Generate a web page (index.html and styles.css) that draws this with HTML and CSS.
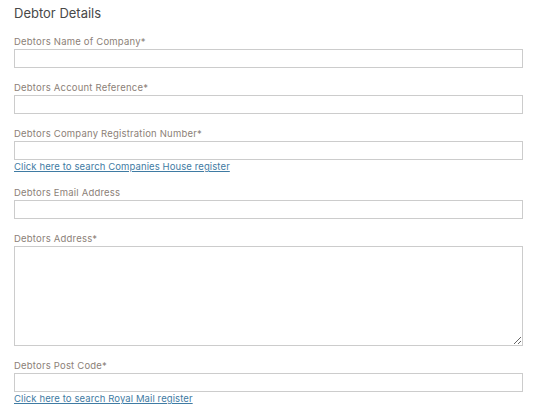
FILE: index.html
```html
<!DOCTYPE html>
<html>
<head>
<meta charset="utf-8">
<link rel="stylesheet" href="styles.css">
</head>
<body>
<div class="panel">
  <h3 class="title">Debtor Details</h3>
  <div class="field">
    <label class="label">Debtors Name of Company*</label>
    <input class="input" type="text">
  </div>
  <div class="field">
    <label class="label">Debtors Account Reference*</label>
    <input class="input" type="text">
  </div>
  <div class="field">
    <label class="label">Debtors Company Registration Number*</label>
    <input class="input" type="text">
    <a class="link" href="#">Click here to search Companies House register</a>
  </div>
  <div class="field">
    <label class="label">Debtors Email Address</label>
    <input class="input" type="text">
  </div>
  <div class="field">
    <label class="label">Debtors Address*</label>
    <textarea class="input area"></textarea>
  </div>
  <div class="field">
    <label class="label">Debtors Post Code*</label>
    <input class="input" type="text">
    <a class="link" href="#">Click here to search Royal Mail register</a>
  </div>
</div>
</body>
</html>
```

FILE: styles.css
```css
html, body {
  margin: 0;
  padding: 0;
  background: #ffffff;
}
body {
  font-family: Inter, "Open Sans", sans-serif;
}
.panel {
  padding: 5px 0 0 14px;
  display: flex;
  flex-direction: column;
}
.title {
  margin: 0 0 15px 0;
  font-size: 13px;
  line-height: 16px;
  font-weight: 400;
  color: #484848;
}
.field {
  display: flex;
  flex-direction: column;
  align-items: flex-start;
  margin-bottom: 14px;
}
.label {
  font-size: 9.5px;
  line-height: 12px;
  letter-spacing: 0.2px;
  color: #8c7f78;
  margin-bottom: 1px;
}
.input {
  box-sizing: border-box;
  width: 509px;
  height: 19px;
  margin: 0;
  padding: 2px 4px;
  border: 1px solid #cccccc;
  border-radius: 0;
  background: #ffffff;
  font-family: inherit;
  font-size: 10px;
  outline: none;
}
.area {
  height: 100px;
  display: block;
}
.link {
  font-size: 9.5px;
  line-height: 13px;
  letter-spacing: 0.1px;
  color: #3f7ba3;
  text-decoration: underline;
}
```
